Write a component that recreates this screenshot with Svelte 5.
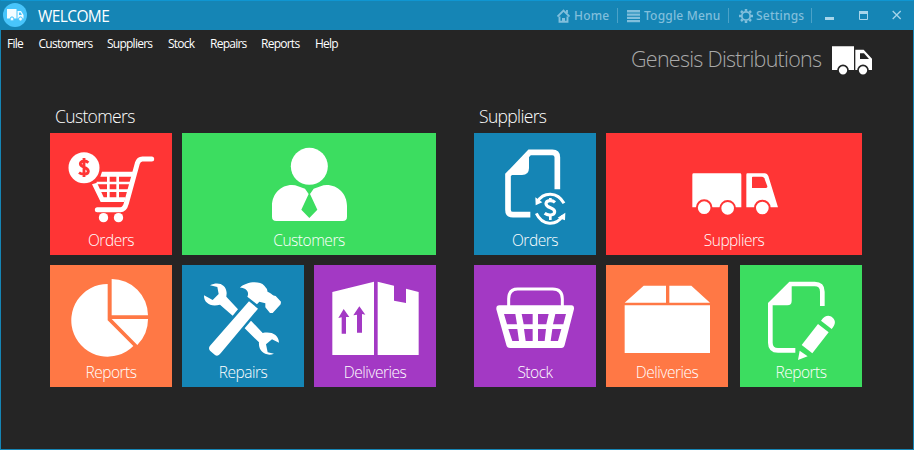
<script>
  const menu = [
    { label: 'File', width: 31.5 },
    { label: 'Customers', width: 68.5 },
    { label: 'Suppliers', width: 61 },
    { label: 'Stock', width: 42 },
    { label: 'Repairs', width: 51 },
    { label: 'Reports', width: 54 },
    { label: 'Help', width: 40 }
  ];
</script>

<div class="window">
  <header class="titlebar">
    <svg class="logo" viewBox="0 0 24 24">
      <circle cx="12" cy="12" r="12" fill="#48c5fb" />
      <path d="M4 6h9.5v9.5H11a2 2 0 0 0-4 0H4zM14.500 8H18l2.500 4v3.500h-1a2 2 0 0 0-4 0h-1z" fill="#f4fcff" />
      <path d="M16 9.500h1.700l1.200 2.500H16z" fill="#48c5fb" />
      <g fill="#f4fcff" stroke="#48c5fb" stroke-width=".8"><circle cx="9" cy="16" r="1.900" /><circle cx="17.500" cy="16" r="1.900" /></g>
    </svg>
    <h1>WELCOME</h1>
    <nav class="commands">
      <button class="home">
        <svg width="13" height="14" viewBox="0 0 13 14" fill="none" stroke="currentColor">
          <path d="M.5 7.500 6.500 1.500l6 6M10 1v3" stroke-width="1.900" />
          <path d="M2.500 7.500v5.200h8V7.500" stroke-width="1.900" />
          <path d="M5 9h3v4H5z" fill="currentColor" stroke="none" />
        </svg>
        <span>Home</span>
      </button>
      <button class="toggle">
        <svg width="13" height="14" viewBox="0 0 13 14" fill="currentColor"><path d="M0 1h13v2.500H0zM0 4.400h13v2.300H0zM0 7.700h13v2.300H0zM0 11h13v2.300H0z" /></svg>
        <span>Toggle Menu</span>
      </button>
      <button class="settings">
        <svg width="14" height="14" viewBox="0 0 14 14" fill="none" stroke="currentColor">
          <circle cx="7" cy="7" r="4.200" stroke-width="1.800" />
          <path d="M7 0v2M7 12v2M0 7h2M12 7h2M2 2l1.600 1.600M10.400 10.400 12 12M12 2l-1.600 1.600M3.600 10.400 2 12" stroke-width="2.500" />
        </svg>
        <span>Settings</span>
      </button>
    </nav>
    <svg class="controls" width="101" height="29" viewBox="0 0 101 29">
      <path d="M13 16h9v3h-9z" fill="#a7d5ea" />
      <path d="M47.500 12v6.500h8V12" fill="none" stroke="#a7d5ea" /><path d="M47 10h9v3h-9z" fill="#a7d5ea" />
      <path d="m80.700 10 8 8m0-8-8 8" fill="none" stroke="#a7d5ea" stroke-width="1.300" />
    </svg>
  </header>

  <div class="top">
    <nav class="menu">
      {#each menu as item}
        <a style:width="{item.width}px">{item.label}</a>
      {/each}
    </nav>
    <div class="brand">
      <span>Genesis Distributions</span>
      <svg width="40" height="29" viewBox="876 137 120 87" fill="#fff">
        <path d="M876 138h66v71h-66zM946 148h25l25 27v34h-50z" />
        <path d="M960 159h12l15 17h-27z" fill="#252525" />
        <g stroke="#252525" stroke-width="5"><circle cx="909" cy="210" r="15" /><circle cx="969" cy="210" r="15" /></g>
      </svg>
    </div>
  </div>

  <main>
    <section class="customers">
      <h2>Customers</h2>
      <div class="row">
        <div class="tile red">
          <svg viewBox="15 9 366 288" fill="#fff">
            <circle cx="117" cy="113" r="46.500" />
            <path d="M130 98c-7-7-23-7-24 3 0 12 24 9 24 23-1 11-20 10-28 4M117 84v57" fill="none" stroke="#ff3535" stroke-width="8.500" />
            <path d="M320 87h-28q-11 0-15 13l-33 120q-5 19-18 19h-69" fill="none" stroke="#fff" stroke-width="15" stroke-linecap="round" stroke-linejoin="round" />
            <path d="M171 125h96l-4 15h-97zM141 163l15-5 20 44h66l-4 14h-71z" />
            <path d="M190 135v74M218 135v74M155 159h101M160 182h90" fill="none" stroke="#fff" stroke-width="8" />
            <circle cx="175.500" cy="263" r="14" /><circle cx="220.500" cy="263" r="14" />
          </svg>
          <span>Orders</span>
        </div>
        <div class="tile green wide-left">
          <svg viewBox="-174 9 762 288" fill="#fff">
            <circle cx="208" cy="109" r="55.500" />
            <path d="M96 260v-32c0-36 26-63 60-63q10 0 18 4l21 7 11 16-22 47 24 25 24-25-22-47 11-16 21-7q8-4 18-4c34 0 61 27 61 63v32q0 13-13 13H109q-13 0-13-13z" />
          </svg>
          <span>Customers</span>
        </div>
      </div>
      <div class="row">
        <div class="tile orange">
          <svg viewBox="15 15 366 288" fill="#fff">
            <path d="M188 72v109l77 77A109 109 0 1 1 188 72zM200 57a109 109 0 0 1 109 109H200zM200 177h109a109 109 0 0 1-32 78z" />
          </svg>
          <span>Reports</span>
        </div>
        <div class="tile blue">
          <svg viewBox="12 15 366 288" fill="#fff">
            <path d="M96 76c23-13 49-4 50 23l-1 11 35 38-16 19-38-33c-28 8-49-5-48-28l26 14 18-18-4-21z" />
            <path d="m219 182 35 37c26-5 48 4 49 29l-21-10-18 15 5 24 19 4c-24 10-48-7-45-34l-43-42z" />
            <path d="M213 124 240 146 128 280q-9 12-18 4L96 272q-6-7 0-15z" />
            <path d="M186 83c18-18 58-22 73-6q9 8 10 19c10 2 15 12 24 12l16 17-1 8-24 26h-8l-14-17v-12l-18-5-7 8-29-23c7-14-3-27-22-27z" />
          </svg>
          <span>Repairs</span>
        </div>
        <div class="tile purple">
          <svg viewBox="12 15 366 288" fill="#fff">
            <path d="M67 96 192 65v220H67zM203 65l49 12v45l36 7V86l38 10v189H203z" />
            <path d="m101 147 17 24h-10v50H95v-49l-10 2zM148 139l18 25-10-2v56h-15v-54l-11 2z" fill="#a339c4" />
          </svg>
          <span>Deliveries</span>
        </div>
      </div>
    </section>

    <section class="suppliers">
      <h2>Suppliers</h2>
      <div class="row">
        <div class="tile blue">
          <svg viewBox="12 9 366 288" fill="#fff">
            <path d="M262 178V82q0-15-15-15h-68l-65 68v104q0 15 15 15h52" fill="none" stroke="#fff" stroke-width="17" />
            <path d="M177 60v54q0 21-21 21h-48z" />
            <path d="M202 216c18-31 60-32 80 4M199 250c18 38 60 38 79 8" fill="none" stroke="#fff" stroke-width="9" />
            <path d="m196 202 1 24 20-9zM286 248l-23 15 22 8z" />
            <path d="M255 217c-8-7-26-8-27 4 0 14 27 11 26 25-1 12-21 11-30 4" fill="none" stroke="#fff" stroke-width="9.500" />
            <path d="M237 204h8v10h-8zM237 258h8v12h-8z" />
          </svg>
          <span>Orders</span>
        </div>
        <div class="tile red wide-right">
          <svg viewBox="-192 9 768 288" fill="#fff">
            <path d="M71 130h139q4 0 4 4v98H67v-98q0-4 4-4zM232 130h53q7 0 10 8l29 94h-95v-98q0-4 3-4z" />
            <path d="M248 140h27q6 0 8 5l9 24q1 5-4 5h-42v-32z" fill="#ff3535" />
            <g stroke="#ff3535" stroke-width="6"><circle cx="102.500" cy="233" r="22" /><circle cx="173" cy="235" r="22" /><circle cx="277" cy="234" r="22" /></g>
          </svg>
          <span>Suppliers</span>
        </div>
      </div>
      <div class="row">
        <div class="tile purple">
          <svg viewBox="12 15 366 288">
            <path d="M116 140v-23q0-30 27-30h105q29 0 29 30v23" fill="none" stroke="#fff" stroke-width="9" />
            <path fill="#fff" fill-rule="evenodd" d="M88 136h216q9 0 8 11l-28 108q-2 9-10 9H120q-9 0-11-9L79 148q-1-12 9-12zM102 162l9 31h30l-5-31zM155 162l6 31h27v-31zM204 162v31h25l7-31zM256 162l-7 31h31l8-31zM115 207l12 36h20l-5-36zM162 207l5 36h21v-36zM204 207v36h20l4-36zM247 207l-5 36h22l10-36z" />
          </svg>
          <span>Stock</span>
        </div>
        <div class="tile orange">
          <svg viewBox="12 15 366 288" fill="#fff">
            <path d="M125 77h67v51H68zM202 77h66l56 51H202zM68 136h256v143H68z" />
          </svg>
          <span>Deliveries</span>
        </div>
        <div class="tile green offset">
          <svg viewBox="15 15 366 288" fill="#fff">
            <path d="M262 138V95q0-23-23-23h-73l-60 60v116q0 23 23 23h52" fill="none" stroke="#fff" stroke-width="14" />
            <path d="M170 73v50q0 13-13 13h-55z" />
            <path d="m249 192 32 25-49 63-32-25zM258 182c14-18 25-17 35-9 9 8 10 19-3 34zM194 272l24 17-29 11z" />
          </svg>
          <span>Reports</span>
        </div>
      </div>
    </section>
  </main>
</div>

<style>
  :global(body) { margin: 0; }
  .window {
    box-sizing: border-box;
    width: 914px;
    height: 450px;
    overflow: hidden;
    background: #252525;
    border: 1px solid #1585b5;
    border-top-color: #0f96d2;
    color: #fff;
    font-family: "Open Sans", "Noto Sans", sans-serif;
  }
  .titlebar { display: flex; align-items: center; height: 29px; background: #1585b5; }
  .logo { width: 24px; height: 24px; margin: 0 11px 1px 2px; }
  h1, h2 { margin: 0; font-weight: 300; }
  h1 { font-size: 15.500px; font-weight: 400; letter-spacing: -0.600px; line-height: 28px; }
  .commands { display: flex; margin-left: auto; color: #81bfdc; }
  button {
    box-sizing: border-box;
    display: flex;
    align-items: center;
    gap: 4px;
    height: 15px;
    padding: 0;
    background: none;
    border: 0;
    border-right: 1px solid #4ba2c8;
    color: inherit;
    font: 500 12px/14px "Noto Sans", sans-serif;
    letter-spacing: 0.200px;
    white-space: nowrap;
  }
  .home { width: 61px; }
  .toggle { width: 111px; padding-left: 9px; }
  .settings { width: 83px; padding-left: 10px; gap: 3px; }
  .controls { flex: none; }
  .top { display: flex; justify-content: space-between; height: 72px; }
  .menu { display: flex; padding: 6px 0 0 6px; font-size: 12px; line-height: 16px; letter-spacing: -0.750px; }
  .brand { display: flex; align-items: flex-start; padding: 15px 41px 0 0; gap: 10px; color: #aaa; }
  .brand span { width: 191px; font-size: 21.500px; line-height: 28px; font-weight: 300; letter-spacing: -0.730px; white-space: nowrap; }
  .brand svg { margin-top: 1px; }
  main { display: flex; gap: 38px; padding-left: 49px; }
  h2 { height: 31px; padding-left: 5px; font-size: 17.500px; line-height: 28px; letter-spacing: -0.650px; }
  .row { display: flex; gap: 10px; margin-bottom: 10px; }
  .tile { width: 122px; height: 122px; display: flex; flex-direction: column; }
  .tile svg { display: block; width: 100%; height: 96px; flex: none; }
  .tile span { text-align: center; font-size: 15.500px; font-weight: 300; line-height: 23px; letter-spacing: -0.480px; }
  .wide-left { width: 254px; }
  .wide-right { width: 256px; }
  .offset { margin-left: 2px; }
  .red { background: #ff3535; }
  .green { background: #3cdd60; }
  .orange { background: #ff7845; }
  .blue { background: #1585b5; }
  .purple { background: #a339c4; }
</style>
